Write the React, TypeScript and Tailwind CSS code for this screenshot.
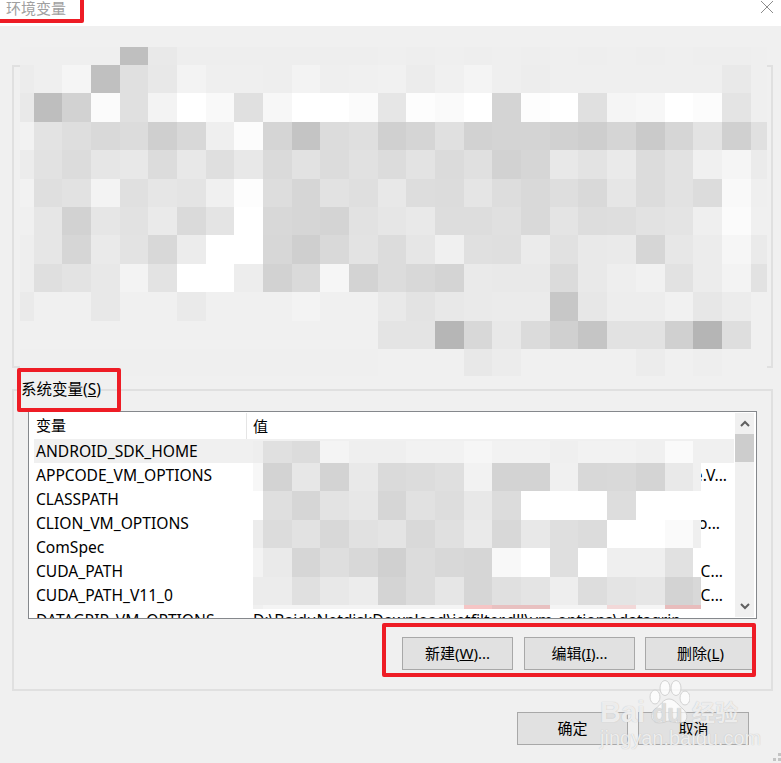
import type { ReactNode } from 'react';

const cols = [20, 34, 62, 91, 120, 148, 177, 206, 234, 263, 292, 320, 349, 378, 406, 435, 464, 492, 521, 550, 578, 607, 636, 665, 693, 722, 751, 767];

// blurred area above the list, one token per cell
const topRows = [
  { y: 47, h: 18, c: 'ef ef ef ef bf e9 ee ee ee ee ee ee ee ef ee ef ee ef ee ef ee ef ee ef ee ee ef' },
  { y: 65, h: 28, c: 'ec ef f5 c0 e0 e8 f3 ef ef ee f3 ef f0 f1 ec f0 f4 ef ed ef ef ef ef ef ef e9 ef' },
  { y: 93, h: 29, c: 'e9 be d2 fb e0 f3 ff f9 e0 f7 ff ff fb e6 fd fa ff d4 fd ff e0 f5 f7 ff fc e4 ef' },
  { y: 122, h: 28, c: 'f2 e3 de d9 dc cf d8 ef fc d5 c4 dc df d0 d5 e0 d2 d4 d4 d1 ce d5 ca d6 e3 d0 e0' },
  { y: 150, h: 29, c: 'ec e2 dc e6 e8 dc e8 df e8 da e2 dc e1 dc e3 db e0 d2 d6 e8 e3 ea dc e2 f0 f5 eb' },
  { y: 179, h: 28, c: 'f2 df e2 f3 e0 e6 e4 f0 fd dd d6 e2 df e8 dd dc e5 dd d9 de d9 e6 dc e2 dc f9 ef' },
  { y: 207, h: 28, c: 'f0 e6 d2 e6 e2 ea da e4 ff d8 d6 d4 e2 e6 e9 dd dd e0 d9 e4 dd de e2 e4 ef fb f0' },
  { y: 235, h: 29, c: 'ee e6 d6 ea e3 d8 ec ff ff d7 cf d9 e3 dc e6 f0 e0 df eb e1 e9 ea d6 e7 ec f6 ea' },
  { y: 264, h: 28, c: 'ee df e3 e8 f3 e3 ff ff ed d2 da f6 d3 dc d8 d4 ea e9 e9 db e9 ee f1 e2 ec f3 e2' },
  { y: 292, h: 29, c: 'ea f0 f0 e8 f0 f0 ea f0 f0 f0 f3 f0 f0 e9 e3 e8 ea eb eb c7 e7 ed ed f1 e7 ec f0' },
  { y: 321, h: 28, c: 'f0 f0 f0 f0 f0 f0 f0 f0 f0 f0 f0 f0 f0 e4 e4 b6 d8 e8 db d0 c5 e2 e2 d0 b5 de f0' },
  { y: 349, h: 27, c: 'ef ef ef ef ef ef ef ef ef ef ef ef ef f0 f0 f0 e8 ec f0 f0 f0 f0 ec f0 ee f0 f0' },
];

const listCols = [253, 263, 292, 320, 349, 378, 406, 435, 464, 492, 521, 550, 578, 607, 636, 665, 693, 701];

// blurred values inside the list
const listRows = [
  { y: 441, h: 22, c: 'ee e0 dc f4 ef ef f2 f2 f6 f2 f2 ef f2 f2 f0 fa f0' },
  { y: 463, h: 28, c: 'f7 d3 e7 d3 e9 da dc df f2 d3 d3 f0 d8 d9 d4 e9 f0' },
  { y: 491, h: 29, c: 'ff df d6 e3 e7 d6 e1 dd e8 dc ff ff ff dd ff ff ff' },
  { y: 520, h: 28, c: 'ec dc e2 d8 e1 e4 d9 e0 ea d8 e8 df dc ff ff fa ef' },
  { y: 548, h: 29, c: 'f3 ea d6 de d8 d0 dc d8 d6 f8 ff df ff ef ef e1 ff' },
  { y: 577, h: 28, c: 'ec ec e0 e8 ec d4 dc e6 d6 e0 e4 ee dd e4 e6 d3 d8' },
  { y: 605, h: 4, c: 'f0 f4 f4 f4 f4 f4 f4 f4 f5c5c5 e8c0c0 e8c0c0 f4 f4 f2d8d8 f5 e8bcbc e8bcbc' },
];

const tone = (t: string) => (t.length === 2 ? `#${t}${t}${t}` : `#${t}`);

function Mosaic({ rows, xs }: { rows: { y: number; h: number; c: string }[]; xs: number[] }) {
  return (
    <svg className="absolute left-0 top-0 pointer-events-none" width={781} height={763} shapeRendering="crispEdges">
      {rows.map((row) =>
        row.c.split(' ').map((t, i) => (
          <rect key={`${row.y}-${i}`} x={xs[i]} y={row.y} width={xs[i + 1] - xs[i]} height={row.h} fill={tone(t)} />
        ))
      )}
    </svg>
  );
}

const vars = [
  { name: 'ANDROID_SDK_HOME', value: '', end: '' },
  { name: 'APPCODE_VM_OPTIONS', value: 'e.V...', end: 'pr-0' },
  { name: 'CLASSPATH', value: '', end: '' },
  { name: 'CLION_VM_OPTIONS', value: 'o...', end: 'pr-[7px]' },
  { name: 'ComSpec', value: '', end: '' },
  { name: 'CUDA_PATH', value: ',C...', end: 'pr-[4px]' },
  { name: 'CUDA_PATH_V11_0', value: ',C...', end: 'pr-[4px]' },
];

function Btn({ children, className = '' }: { children: ReactNode; className?: string }) {
  return (
    <button className={`w-[111px] h-[33px] bg-[#e1e1e1] border border-[#a8a8a8] text-[15px] text-black flex items-center justify-center ${className}`}>
      {children}
    </button>
  );
}

function RedBox({ className }: { className: string }) {
  return <div className={`absolute border-[4px] border-[#ee1c25] rounded-[2px] pointer-events-none ${className}`} />;
}

export default function App() {
  return (
    <div className="relative w-[781px] h-[763px] overflow-hidden bg-[#f0f0f0] text-black font-['Noto_Sans','Noto_Sans_CJK_SC',sans-serif]">
      {/* title bar */}
      <div className="h-[26px] bg-white flex items-start justify-between">
        <span className="pl-[6px] text-[15px] leading-[17px] text-[#a0a0a0]">环境变量</span>
        <svg width="14" height="14" viewBox="0 0 14 14" className="mr-[7px]" stroke="#8c8c8c" strokeWidth="1" fill="none">
          <path d="M1 1 L13 13 M13 1 L1 13" />
        </svg>
      </div>

      <div className="pt-[39px] pl-[12px]">
        <div className="w-[761px] h-[303px] border-2 border-[#e0e0e0]" />

        <div className="relative mt-[21px] w-[761px] h-[302px] border-2 border-[#e0e0e0] pl-[14px] pt-[20px]">
          <span className="absolute left-[7px] top-[-12px] bg-[#f0f0f0] text-[15.5px] leading-[20px]">
            系统变量(<span className="underline">S</span>)
          </span>

          {/* list */}
          <div className="w-[729px] h-[208px] border border-[#85888c] bg-white flex overflow-hidden">
            <div className="ml-[5px] w-[700px] shrink-0">
              <div className="h-[27px] flex items-center text-[15px]">
                <span className="w-[212px] pl-[2px]">变量</span>
                <span className="h-[26px] border-l border-[#e5e5e5] pl-[6px] leading-[26px]">值</span>
              </div>
              {vars.map((v, i) => (
                <div key={v.name} className={`h-[24px] pt-[2px] flex items-center text-[15.6px] whitespace-nowrap ${i === 0 ? 'bg-[#f0f0f0]' : ''}`}>
                  <span className="pl-[2px] w-[219px]">{v.name}</span>
                  <span className={`w-[474px] flex justify-end ${v.end}`}>{v.value}</span>
                </div>
              ))}
              <div className="h-[24px] pt-[4px] flex items-center text-[15.6px] whitespace-nowrap">
                <span className="pl-[2px] w-[219px]">DATAGRIP_VM_OPTIONS</span>
                <span>D:\BaiduNetdiskDownload\jetfilter.dll\vm-options\datagrip</span>
              </div>
            </div>
            {/* scrollbar */}
            <div className="ml-[1px] mt-[1px] mb-[1px] w-[19px] bg-[#f0f0f0] flex flex-col items-center justify-between">
              <div className="w-full">
                <div className="h-[21px] flex items-center justify-center">
                  <svg width="10" height="7" viewBox="0 0 10 7" fill="none" stroke="#606060" strokeWidth="2">
                    <path d="M1 6 L5 2 L9 6" />
                  </svg>
                </div>
                <div className="h-[28px] bg-[#cdcdcd]" />
              </div>
              <div className="h-[21px] flex items-center justify-center">
                <svg width="10" height="7" viewBox="0 0 10 7" fill="none" stroke="#606060" strokeWidth="2">
                  <path d="M1 1 L5 5 L9 1" />
                </svg>
              </div>
            </div>
          </div>

          <div className="flex mt-[18px] pl-[374px]">
            <Btn>新建(<span className="underline">W</span>)...</Btn>
            <Btn className="ml-[11px]">编辑(<span className="underline">I</span>)...</Btn>
            <Btn className="ml-[10px]">删除(<span className="underline">L</span>)</Btn>
          </div>
        </div>

        <div className="flex mt-[21px] pl-[505px] gap-[10px]">
          <Btn>确定</Btn>
          <Btn>取消</Btn>
        </div>
      </div>

      <Mosaic rows={topRows} xs={cols} />
      <Mosaic rows={listRows} xs={listCols} />

      {/* red annotations */}
      <RedBox className="left-[-6px] top-[-6px] w-[90px] h-[29px]" />
      <RedBox className="left-[17px] top-[368px] w-[104px] h-[44px]" />
      <RedBox className="left-[382px] top-[623px] w-[374px] h-[54px]" />

      {/* watermark */}
      <div className="absolute left-[598px] top-[678px] w-[145px] h-[70px] pointer-events-none">
        <svg className="absolute left-[50px] top-[2px]" width="42" height="44" viewBox="0 0 42 44" fill="#ffffff" fillOpacity="0.7" stroke="#d2d2d2" strokeWidth="1">
          <ellipse cx="7" cy="17" rx="5" ry="7" />
          <ellipse cx="17" cy="8" rx="5" ry="7.5" />
          <ellipse cx="28" cy="8" rx="5" ry="7.5" />
          <ellipse cx="37" cy="18" rx="5" ry="7" />
          <path d="M21 19 C15 19 13 25 7 29 C1 34 3 43 11 43 C16 43 18 41 21 41 C24 41 27 43 32 43 C40 43 41 34 35 29 C30 25 27 19 21 19 Z" />
        </svg>
        <span className="absolute left-[2px] top-[18px] text-[29px] leading-[32px] font-bold font-['Liberation_Sans',sans-serif] text-white/75 [text-shadow:0_0_1px_#b4b4b4]">Bai</span>
        <span className="absolute left-[54px] top-[21px] text-[25px] leading-[28px] font-bold font-['Liberation_Sans',sans-serif] text-[#ececec]/80 [text-shadow:0_0_1px_#a8a8a8]">du</span>
        <span className="absolute left-[94px] top-[21px] text-[23px] leading-[26px] font-bold text-white/75 [text-shadow:0_0_1px_#b4b4b4]">经验</span>
        <span className="absolute left-[2px] top-[49px] text-[20px] leading-[22px] font-['Liberation_Sans',sans-serif] text-white/75 whitespace-nowrap [text-shadow:0_0_1px_#b4b4b4]">jingyan.baidu.com</span>
      </div>

      {/* resize grip */}
      <svg className="absolute right-0 bottom-0" width="8" height="10" viewBox="0 0 8 10" fill="#c4c4c4" shapeRendering="crispEdges">
        <rect x="5" y="0" width="3" height="3" />
        <rect x="0" y="5" width="3" height="3" />
        <rect x="5" y="5" width="3" height="3" />
      </svg>
    </div>
  );
}
